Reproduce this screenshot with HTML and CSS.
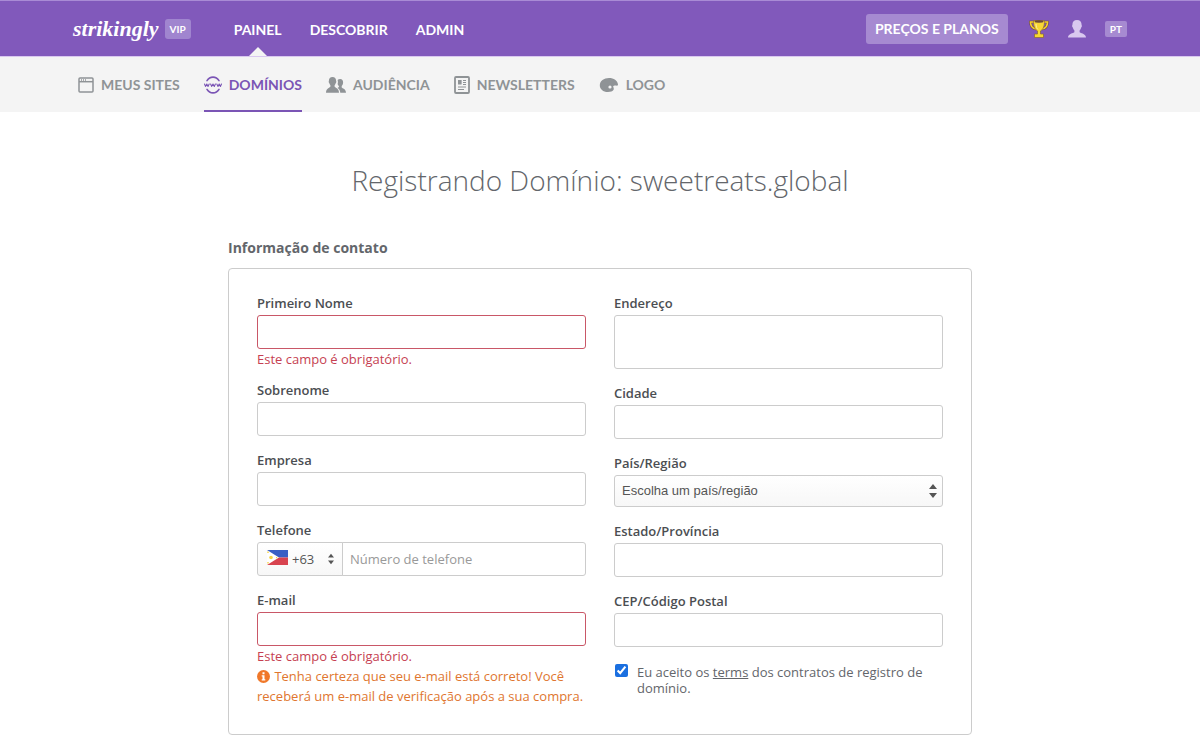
FILE: index.html
```html
<!DOCTYPE html>
<html lang="pt">
<head>
    <meta charset="UTF-8">
    <meta name="viewport" content="width=device-width, initial-scale=1.0">
    <title>Strikingly - Domínios</title>
    <link rel="stylesheet" href="styles.css">
</head>
<body>
    <header class="topbar">
        <a href="#" class="logo">strikingly</a>
        <span class="vip">VIP</span>
        <nav class="main-nav">
            <a href="#" class="active">PAINEL</a>
            <a href="#">DESCOBRIR</a>
            <a href="#">ADMIN</a>
        </nav>
        <div class="topbar-right">
            <a href="#" class="pricing-btn">PREÇOS E PLANOS</a>
            <a href="#" class="icon-link" aria-label="Prêmios">
                <svg width="20" height="20" viewBox="0 0 20 20">
                    <path d="M5 3H1.500C1.500 7.500 3 9.500 7 10M15 3h3.500c0 4.500-1.500 6.500-5.500 7" fill="none" stroke="#6b4a3a" stroke-width="2.600"/>
                    <path d="M5 3H1.500C1.500 7.500 3 9.500 7 10M15 3h3.500c0 4.500-1.500 6.500-5.500 7" fill="none" stroke="#f3cf2e" stroke-width="1.600"/>
                    <path d="M4.500 1.500h11c0 5.500-1 8.500-4 10.500v3h3v3.500h-9V15h3v-3c-3-2-4-5-4-10.500z" fill="#f7d733" stroke="#8a6538" stroke-width=".7"/>
                    <ellipse cx="10" cy="2.500" rx="4.500" ry="1.200" fill="#6b4a3a"/>
                    <path d="M7 5c.2 3 .8 4.500 2 5.500" fill="none" stroke="#fff2a0"/>
                </svg>
            </a>
            <a href="#" class="icon-link" aria-label="Conta">
                <svg width="20" height="20" viewBox="0 0 20 20" fill="#d9c8ef">
                    <path d="M10 1c3 0 4.600 1.900 4.600 4.700 0 .6.400.7.300 1.500-.1.700-.5 1-.7 1.400-.3 1.300-.9 2.200-1.600 2.900v1.700c.8 1 6.400 1.500 6.400 5.300H1c0-3.800 5.600-4.300 6.400-5.300v-1.700c-.7-.7-1.300-1.600-1.600-2.900-.2-.4-.6-.7-.7-1.400-.1-.8.300-.9.300-1.500C5.400 2.900 7 1 10 1z"/>
                </svg>
            </a>
            <a href="#" class="lang">PT</a>
        </div>
    </header>

    <nav class="sub-nav">
        <a href="#">
            <svg width="16" height="16" viewBox="0 0 16 16" fill="none" stroke="#8f9396" stroke-width="1.500">
                <rect x="1" y="1" width="14" height="14" rx="1"/>
                <path d="M1 4.700h14"/>
                <path d="M3 2.900h5" stroke-dasharray="1 1"/>
            </svg>
            MEUS SITES
        </a>
        <a href="#" class="active">
            <svg width="18" height="18" viewBox="0 0 18 18" fill="none" stroke="#7b55b5" stroke-width="1.600" stroke-linecap="round" stroke-linejoin="round">
                <path d="M3 4.600C4.400 2.400 6.500 1.100 9 1.100s4.600 1.300 6 3.500M3 13.400c1.400 2.200 3.500 3.500 6 3.500s4.600-1.300 6-3.500"/>
                <path d="M.5 8l1 2.400L2.800 8l1.200 2.400L5.200 8M6.600 8l1 2.400L9 8l1.300 2.400L11.400 8M12.800 8l1.200 2.400L15.200 8l1.200 2.400L17.500 8" stroke-width="1.100"/>
            </svg>
            DOMÍNIOS
        </a>
        <a href="#">
            <svg width="20" height="18" viewBox="0 0 20 18" fill="#8f9396">
                <path d="M6.500 1c2.300 0 3.600 1.500 3.600 3.800 0 .5.300.6.200 1.200-.1.600-.4.800-.5 1.100-.3 1-.7 1.700-1.200 2.200v1.500c.8 1 4.400 1.500 4.400 6H0c0-4.500 3.600-5 4.400-6V9.300c-.5-.5-.9-1.200-1.200-2.200-.1-.3-.4-.5-.5-1.100-.1-.6.200-.7.200-1.200C2.900 2.500 4.200 1 6.500 1z"/>
                <path d="M14.200 3c1.900 0 2.900 1.300 2.900 3.200 0 1.700-.6 3-1.400 3.800v1.400c.7.900 4.300 1.200 4.300 5.400h-5.700c-.2-2.500-1.300-3.700-2.800-4.700.4-.5 1-.6 1.400-1V10c-.6-.4-1-1.200-1.300-2 .5-1.300.4-2.700 0-3.900.6-.7 1.500-1.100 2.600-1.100z"/>
            </svg>
            AUDIÊNCIA
        </a>
        <a href="#">
            <svg width="16" height="18" viewBox="0 0 16 18" fill="none" stroke="#8f9396">
                <rect x="1" y="1" width="14" height="16" rx="1" stroke-width="1.800"/>
                <path d="M4 5h3.500M4 7h3.500M9 4.500h3M9 6.500h3M9 8.500h3M4 11h8M4 13.500h6" stroke-width="1.200"/>
                <path d="M4 4h3.500v4.500H4z" fill="#8f9396" stroke="none"/>
            </svg>
            NEWSLETTERS
        </a>
        <a href="#">
            <svg width="20" height="16" viewBox="0 0 20 16">
                <path d="M10 1c4.800 0 8.500 2.500 9 6.500.1 1.300-1.200 1.300-2.400 1-2-.4-2.900.6-2.100 2 .8 1.600.2 4.500-5.500 4.500C4 15 .8 12 .8 8.200.8 4 5 1 10 1z" fill="#8f9396"/>
                <circle cx="11" cy="10" r="1.600" fill="#f4f4f4"/>
            </svg>
            LOGO
        </a>
    </nav>

    <main class="page">
        <h1>Registrando Domínio: sweetreats.global</h1>
        <h2>Informação de contato</h2>
        <form class="card">
            <div class="column">
                <div class="field has-error">
                    <label for="first-name">Primeiro Nome</label>
                    <input type="text" id="first-name">
                    <p class="error">Este campo é obrigatório.</p>
                </div>
                <div class="field">
                    <label for="last-name">Sobrenome</label>
                    <input type="text" id="last-name">
                </div>
                <div class="field">
                    <label for="company">Empresa</label>
                    <input type="text" id="company">
                </div>
                <div class="field">
                    <label for="phone">Telefone</label>
                    <div class="phone">
                        <div class="select-box code">
                            <select aria-label="Código do país">
                                <option>+63</option>
                            </select>
                            <svg class="flag" width="21" height="15" viewBox="0 0 21 15">
                                <path d="M0 0h21v7.500H0z" fill="#3a5fc4"/>
                                <path d="M0 7.500h21V15H0z" fill="#d8434f"/>
                                <path d="M0 0l12 7.500L0 15z" fill="#fff"/>
                                <circle cx="4" cy="7.500" r="1.800" fill="#f5d547"/>
                                <path d="M.3 1.500h1.400v1.400H.3zM.3 12.100h1.400v1.400H.3zM9 7h1.200v1.200H9z" fill="#f5d547"/>
                            </svg>
                            <svg class="arrows" width="6" height="12" viewBox="0 0 8 14" fill="#555">
                                <path d="M4 0l4 5H0zM4 14l4-5H0z"/>
                            </svg>
                        </div>
                        <input type="tel" id="phone" placeholder="Número de telefone">
                    </div>
                </div>
                <div class="field has-error">
                    <label for="email">E-mail</label>
                    <input type="email" id="email">
                    <p class="error">Este campo é obrigatório.</p>
                    <p class="hint">
                        <svg width="13" height="13" viewBox="0 0 13 13">
                            <circle cx="6.500" cy="6.500" r="6.500" fill="#f0782a"/>
                            <path d="M5.500 2.300h2v1.900h-2zM4.700 5.200h2.800v4h.8v1.300H4.700V9.200h.8V6.500h-.8z" fill="#fff"/>
                        </svg>
                        Tenha certeza que seu e-mail está correto! Você receberá um e-mail de verificação após a sua compra.
                    </p>
                </div>
            </div>
            <div class="column">
                <div class="field">
                    <label for="address">Endereço</label>
                    <textarea id="address"></textarea>
                </div>
                <div class="field">
                    <label for="city">Cidade</label>
                    <input type="text" id="city">
                </div>
                <div class="field">
                    <label for="country">País/Região</label>
                    <div class="select-box">
                        <select id="country">
                            <option>Escolha um país/região</option>
                        </select>
                        <svg class="arrows" width="8" height="14" viewBox="0 0 8 14" fill="#555">
                            <path d="M4 0l4 5H0zM4 14l4-5H0z"/>
                        </svg>
                    </div>
                </div>
                <div class="field">
                    <label for="state">Estado/Província</label>
                    <input type="text" id="state">
                </div>
                <div class="field">
                    <label for="zip">CEP/Código Postal</label>
                    <input type="text" id="zip">
                </div>
                <div class="terms">
                    <input type="checkbox" id="terms" checked>
                    <label for="terms">Eu aceito os <a href="#">terms</a> dos contratos de registro de domínio.</label>
                </div>
            </div>
        </form>
    </main>
</body>
</html>
```
FILE: styles.css
```css
* {
    box-sizing: border-box;
}
body {
    margin: 0;
    background: #fff;
    color: #63666b;
    font-family: "Open Sans", sans-serif;
    font-size: 13px;
    line-height: 20px;
}
a {
    color: inherit;
    text-decoration: none;
}
h1, h2, p {
    margin: 0;
}
svg {
    flex: none;
}

/* top bar */
.topbar {
    display: flex;
    align-items: center;
    height: 57px;
    padding: 0 73px;
    background: #8159bb;
    border-top: 1px solid #a98bd5;
    border-bottom: 1px solid #d9c8ef;
    color: #fff;
    font-family: Lato, sans-serif;
    font-weight: bold;
}
.logo {
    font-family: "Liberation Serif", serif;
    font-size: 22px;
    font-style: italic;
}
.vip {
    margin-left: 6px;
    padding: 0 5px;
    background: #a085cf;
    border-radius: 3px;
    font-size: 10px;
}
.main-nav {
    display: flex;
    gap: 28px;
    height: 100%;
    margin-left: 43px;
    font-size: 14px;
    line-height: 57px;
}
.main-nav .active {
    position: relative;
}
.main-nav .active::after {
    content: "";
    position: absolute;
    bottom: 0;
    left: 50%;
    margin-left: -9px;
    border: 9px solid transparent;
    border-top: 0;
    border-bottom-color: #f4f4f4;
}
.topbar-right {
    display: flex;
    align-items: center;
    gap: 18px;
    margin-left: auto;
}
.pricing-btn {
    padding: 0 9px;
    margin-right: 3px;
    background: #a68ad1;
    border-radius: 3px;
    font-size: 14px;
    line-height: 30px;
}
.icon-link {
    display: flex;
}
.lang {
    padding: 0 5px;
    background: #a68ad1;
    border-radius: 2px;
    font-size: 10px;
    line-height: 16px;
}

/* sub nav */
.sub-nav {
    display: flex;
    gap: 24px;
    height: 55px;
    padding: 0 78px;
    background: #f4f4f4;
    color: #8f9396;
    font-family: Lato, sans-serif;
    font-size: 14px;
    font-weight: bold;
}
.sub-nav a {
    display: flex;
    align-items: center;
    gap: 7px;
    padding-top: 3px;
    border-bottom: 2px solid transparent;
}
.sub-nav .active {
    border-color: #7b55b5;
    color: #7b55b5;
}

/* contact form */
.page {
    max-width: 744px;
    margin: 0 auto;
    padding: 48px 0 8px;
}
h1 {
    font-size: 28px;
    font-weight: 300;
    line-height: 40px;
    text-align: center;
}
h2 {
    margin: 38px 0 10px;
    font-size: 14px;
    font-weight: bold;
}
.card {
    display: grid;
    grid-template-columns: 1fr 1fr;
    gap: 28px;
    padding: 24px 28px 17px;
    border: 1px solid #ccc;
    border-radius: 4px;
}
.field {
    margin-bottom: 14px;
}
.field > label {
    display: block;
    margin-bottom: 2px;
    color: #4b4e52;
    font-weight: 600;
}
.field input, .field textarea, select {
    display: block;
    width: 100%;
    height: 34px;
    padding: 0 7px;
    background: #fff;
    border: 1px solid #ccc;
    border-radius: 3px;
    color: #555;
    font: inherit;
}
.field textarea {
    height: 54px;
    resize: none;
}
.field input::placeholder {
    color: #999;
}
.has-error {
    margin-bottom: 11px;
}
.has-error input {
    border-color: #c95767;
}
.error {
    color: #c63f52;
}
.hint {
    color: #e0762f;
}
.hint svg {
    margin-right: 1px;
    vertical-align: -2px;
}
.select-box {
    position: relative;
}
.select-box select {
    appearance: none;
    height: 32px;
    background: linear-gradient(#fff, #f7f7f7);
    font-family: "Liberation Sans", sans-serif;
}
.arrows {
    position: absolute;
    top: 9px;
    right: 6px;
    pointer-events: none;
}
.phone {
    display: flex;
}
.phone .code {
    width: 86px;
}
.phone .code select {
    height: 34px;
    padding-left: 34px;
    border-radius: 3px 0 0 3px;
    font-family: inherit;
}
.phone .flag {
    position: absolute;
    top: 8px;
    left: 10px;
    pointer-events: none;
}
.phone .arrows {
    top: 11px;
    right: 9px;
}
.phone input {
    flex: 1;
    width: auto;
    margin-left: -1px;
    border-radius: 0 3px 3px 0;
}
.terms {
    display: flex;
    align-items: flex-start;
    gap: 9px;
    padding: 3px 0 0 1px;
    line-height: 16px;
}
.terms input {
    flex: none;
    margin: 0;
    accent-color: #1a6fe0;
}
.terms a {
    text-decoration: underline;
}

@media (max-width: 700px) {
    .card {
        grid-template-columns: 1fr;
    }
    .topbar, .sub-nav {
        height: auto;
        flex-wrap: wrap;
        padding: 0 16px;
    }
}
```
